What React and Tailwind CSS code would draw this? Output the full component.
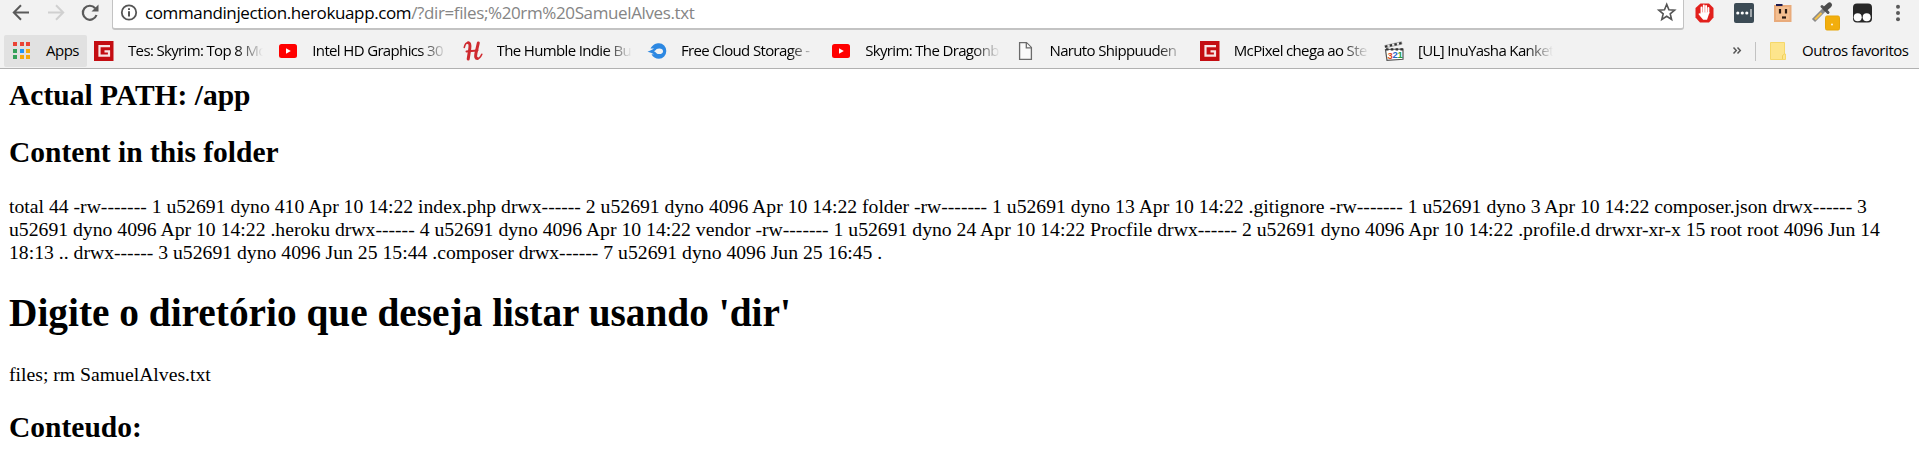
const UI = "font-['Open_Sans','Noto_Sans',sans-serif]";

function GIcon() {
  return (
    <svg width="20" height="20" viewBox="0 0 20 20">
      <rect width="19.5" height="20" fill="#c40d12" />
      <path d="M16 5.2H5.5V14.6H15V10.4H10.5" fill="none" stroke="#f7e4e4" strokeWidth="2.2" />
    </svg>
  );
}
function TubeIcon() {
  return (
    <svg width="20" height="20" viewBox="0 0 20 20">
      <rect x="1" y="3" width="18" height="14" rx="2.5" fill="#f00" />
      <path d="M8 7.2 12.8 10 8 12.8Z" fill="#fff" />
    </svg>
  );
}
function HumbleIcon() {
  return (
    <svg width="20" height="20" viewBox="0 0 20 20" fill="none" stroke="#cf2a2f" strokeLinecap="round" strokeLinejoin="round">
      <path d="M1.3 6.4C2 3 3.8 1.6 5.3 1.8" strokeWidth="1.6" />
      <path d="M5.300 1.800C7.800 2.200 7 6 6.600 9L5.200 18" strokeWidth="3" />
      <path d="M15.300 2 12.900 12.500C12.300 16 12.800 17.600 14.300 17.600" strokeWidth="3" />
      <path d="M14.300 17.800C16.300 17.800 17.600 16 18.800 13.300" strokeWidth="1.600" />
      <path d="M3.500 10.500C7 9.500 10 10.500 14.500 9.300" strokeWidth="2" />
    </svg>
  );
}
function CloudIcon() {
  return (
    <svg width="20" height="20" viewBox="0 0 20 20">
      <path d="M0.500 10.700C3 9.800 5 8.800 7 7.500H3.500C6 3.500 9 2.300 12 2.300a7.300 7.700 0 0 1 0 15.400C8.500 17.700 6 16 4.500 13.200H7C5 12 3 11.300 0.500 10.700Z" fill="#2d88e2" />
      <ellipse cx="12.300" cy="10.200" rx="3.700" ry="2.800" fill="#f2f2f2" />
      <path d="M7 10.200 11 7.800V12.600Z" fill="#f2f2f2" />
    </svg>
  );
}
function FileIcon() {
  return (
    <svg width="20" height="20" viewBox="0 0 20 20" fill="#fafafa" stroke="#6b6b6b" strokeWidth="1.300">
      <path d="M4.600 1.700H11.500L16.400 6.600V18.400H4.600Z" />
      <path d="M11.300 1.900V6.900H16.200" />
    </svg>
  );
}
function ClapIcon() {
  return (
    <svg width="20" height="20" viewBox="0 0 20 20">
      <path d="M1.500 8.500 19 8V18.300L3 19.300Z" fill="#fff" stroke="#555" strokeWidth="1.200" />
      <path d="M0.800 4.500 17.500 0.700 18 3.200 1.400 6.800Z" fill="#eee" stroke="#777" strokeWidth=".5" />
      <path d="M1 5.700 17.700 2" stroke="#333" strokeWidth="2.200" strokeDasharray="2.500 2.300" />
      <path d="M2 8.400H19" stroke="#333" strokeWidth="2.200" strokeDasharray="2.500 2.300" />
      <g fontFamily="Liberation Sans" fontWeight="700" fontSize="9.500">
        <text x="3.500" y="17.500" fill="#dd4b1c">3</text>
        <text x="8.500" y="17.200" fill="#2467c9">2</text>
        <text x="13.400" y="16.500" fill="#2a9d3a">1</text>
      </g>
    </svg>
  );
}

const bookmarks = [
  { icon: GIcon, label: "Tes: Skyrim: Top 8 Mo" },
  { icon: TubeIcon, label: "Intel HD Graphics 30" },
  { icon: HumbleIcon, label: "The Humble Indie Bu" },
  { icon: CloudIcon, label: "Free Cloud Storage -" },
  { icon: TubeIcon, label: "Skyrim: The Dragonb" },
  { icon: FileIcon, label: "Naruto Shippuuden" },
  { icon: GIcon, label: "McPixel chega ao Ste" },
  { icon: ClapIcon, label: "[UL] InuYasha Kanket" },
];

const appDots = ["#ea4335", "#ea4335", "#ea4335", "#34a05a", "#2196f3", "#f5a90b", "#34a05a", "#f5a90b", "#f5a90b"];

function Toolbar() {
  return (
    <div className="flex h-[30px] items-start">
      <div className="w-[112px] shrink-0">
        <svg width="112" height="29" viewBox="0 0 112 29" fill="none" strokeWidth="2">
          <path d="M29 12.500H14M21 5.300 13.800 12.500 21 19.700" stroke="#5a5a5a" />
          <path d="M48 12.500H63M56 5.300 63.200 12.500 56 19.700" stroke="#d0d0d0" />
          <path d="M95.200 8.200A7 7 0 1 0 96.500 15" stroke="#5a5a5a" strokeWidth="2.200" />
          <path d="M98.500 4.500V11.500H91.500Z" fill="#5a5a5a" />
        </svg>
      </div>
      <div className="flex h-[30px] w-[1572px] shrink-0 items-start rounded-b-[3px] border-x border-b-2 border-[#c3c3c3] bg-white">
        <svg width="32" height="26" viewBox="0 0 32 26" className="shrink-0">
          <circle cx="16" cy="12.500" r="7.200" fill="none" stroke="#555" strokeWidth="1.800" />
          <path d="M16 11.300V16.500M16 8.200V10" stroke="#555" strokeWidth="2" />
        </svg>
        <div className={`${UI} h-[26px] w-[1501px] whitespace-nowrap text-[17px] leading-[25px] tracking-[-0.38px] text-black`}>
          commandinjection.herokuapp.com<span className="text-[#858585]">/?dir=files;%20rm%20SamuelAlves.txt</span>
        </div>
        <svg width="36" height="26" viewBox="0 0 36 26" className="shrink-0">
          <path d="M20.700 4.300 22.900 9.700 28.600 10.100 24.200 13.800 25.600 19.400 20.700 16.300 15.800 19.400 17.200 13.800 12.800 10.100 18.500 9.700Z" fill="none" stroke="#555" strokeWidth="1.600" />
        </svg>
      </div>
      <svg width="235" height="34" viewBox="0 0 235 34" className="shrink-0">
        <path d="M16.500 3.500H25L29.500 8V17.500L25 22.500H16L11.500 17.500V8Z" fill="#e2201c" />
        <g stroke="#fff" strokeWidth="1.900" strokeLinecap="round">
          <path d="M17.500 14V7.500M19.800 12V5.500M22.100 12V6M24.400 13V8" />
          <path d="M17.500 13H24.500L22.500 19H19.500L15.300 14" fill="#fff" strokeWidth="1.500" />
        </g>
        <rect x="50" y="3" width="20" height="20" rx="2" fill="#3c4b55" />
        <g fill="#fff">
          <circle cx="53.800" cy="13" r="1.600" /><circle cx="58.300" cy="13" r="1.600" /><circle cx="62.800" cy="13" r="1.600" />
          <rect x="66.500" y="9" width="1" height="8" />
        </g>
        <rect x="90" y="5" width="17.500" height="17" fill="#e9ab7b" />
        <rect x="92" y="7" width="13.500" height="13" fill="#f3be90" />
        <path d="M92 6V4H98.500V6Z" fill="#19194f" />
        <path d="M96 9V13.500M102 9V13.500" stroke="#2a1a12" strokeWidth="2.200" />
        <path d="M98 17.500H102" stroke="#2a1a12" strokeWidth="2.200" />
        <path d="M129.500 20.500 140 10" stroke="#8a8a8a" strokeWidth="4.500" />
        <path d="M131 19.500 137.500 13" stroke="#f2c04c" strokeWidth="2.200" />
        <path d="M138 6.500 144 12.500" stroke="#555" strokeWidth="3" strokeLinecap="round" />
        <path d="M141.500 8.500 145.500 5" stroke="#4b4b4b" strokeWidth="5" strokeLinecap="round" />
        <rect x="141.500" y="16" width="14" height="14" rx="1.500" fill="#f2ae0d" stroke="#e6a509" />
        <circle cx="148" cy="24.500" r=".9" fill="#fff" />
        <rect x="169" y="3.500" width="19" height="19" rx="4" fill="#272727" />
        <circle cx="173.700" cy="17.200" r="4" fill="#fff" /><circle cx="182.700" cy="17.200" r="4" fill="#fff" />
        <g fill="#5a5a5a">
          <circle cx="214" cy="6.800" r="2" /><circle cx="214" cy="13" r="2" /><circle cx="214" cy="19.200" r="2" />
        </g>
      </svg>
    </div>
  );
}

function BookmarksBar() {
  return (
    <div className={`${UI} flex h-[38px] items-start pl-1 pt-[5px] text-[15px] leading-[31px] text-black`}>
      <div className="flex h-8 w-[83px] shrink-0 rounded-[2px] bg-[#e1e1e1] pl-[9px]">
        <div className="mt-[7px] grid h-[17px] w-[17px] grid-cols-3 gap-[2.500px]">
          {appDots.map((c, i) => (
            <span key={i} style={{ backgroundColor: c }} />
          ))}
        </div>
        <span className="ml-4 tracking-[-0.5px]">Apps</span>
      </div>
      <div className="ml-[7px] flex w-[1475px] shrink-0">
        {bookmarks.map(({ icon: Icon, label }) => (
          <div key={label} className="flex w-[184.300px] shrink-0 items-center gap-[14px]">
            <span className="h-5 w-5 shrink-0"><Icon /></span>
            <span className="w-[135px] overflow-hidden whitespace-nowrap tracking-[-0.65px] [mask-image:linear-gradient(to_right,black_108px,transparent_135px)]">
              {label}
            </span>
          </div>
        ))}
      </div>
      <svg width="60" height="32" viewBox="0 0 60 32" className="ml-[160px] shrink-0">
        <path d="M4.500 12.500 7.300 15.500 4.500 18.500M8.500 12.500 11.300 15.500 8.500 18.500" fill="none" stroke="#555" strokeWidth="1.500" />
        <path d="M26.500 7V26" stroke="#c2c2c2" />
        <path d="M41.500 7.500H55.500V19H56.500V24.500H41.500Z" fill="#fde58c" stroke="#f5d86a" />
        <path d="M53.500 24V20.500L55.500 19" fill="none" stroke="#f0cf58" />
      </svg>
      <span className="ml-[13px] whitespace-nowrap tracking-[-0.45px]">Outros favoritos</span>
    </div>
  );
}

export default function App() {
  return (
    <div className="h-[455px] w-[1919px] overflow-hidden bg-white">
      <header className="h-[69px] border-b border-[#b1b1b1] bg-[#f2f2f2]">
        <Toolbar />
        <BookmarksBar />
      </header>
      <main className="px-[9px] pt-[9px] font-['Liberation_Serif',serif] text-[19.7px] leading-[23px] text-black">
        <h2 className="text-[29.5px] font-bold leading-[34px]">Actual PATH: /app</h2>
        <h2 className="mt-[23px] text-[29.5px] font-bold leading-[34px]">Content in this folder</h2>
        <p className="mt-[26px] whitespace-nowrap">
          total 44 -rw------- 1 u52691 dyno 410 Apr 10 14:22 index.php drwx------ 2 u52691 dyno 4096 Apr 10 14:22 folder -rw------- 1 u52691 dyno 13 Apr 10 14:22 .gitignore -rw------- 1 u52691 dyno 3 Apr 10 14:22 composer.json drwx------ 3<br />
          u52691 dyno 4096 Apr 10 14:22 .heroku drwx------ 4 u52691 dyno 4096 Apr 10 14:22 vendor -rw------- 1 u52691 dyno 24 Apr 10 14:22 Procfile drwx------ 2 u52691 dyno 4096 Apr 10 14:22 .profile.d drwxr-xr-x 15 root root 4096 Jun 14<br />
          18:13 .. drwx------ 3 u52691 dyno 4096 Jun 25 15:44 .composer drwx------ 7 u52691 dyno 4096 Jun 25 16:45 .
        </p>
        <h1 className="mt-[26px] text-[39.35px] font-bold leading-[46px]">Digite o diretório que deseja listar usando 'dir'</h1>
        <p className="mt-[27px]">files; rm SamuelAlves.txt</p>
        <h2 className="mt-[24px] text-[29.5px] font-bold leading-[34px]">Conteudo:</h2>
      </main>
    </div>
  );
}
